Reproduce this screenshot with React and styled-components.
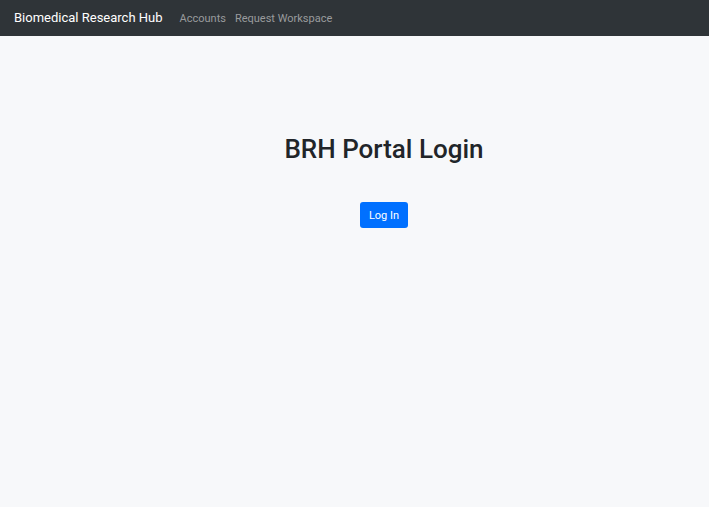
import React from "react";
import styled, { createGlobalStyle } from "styled-components";

const GlobalStyle = createGlobalStyle`
  * { box-sizing: border-box; }
  body {
    margin: 0;
    background: #f7f8fa;
    color: #212529;
    font-family: Roboto, "Liberation Sans", sans-serif;
  }
`;

const Navbar = styled.nav`
  display: flex;
  align-items: baseline;
  padding: 8px 14px;
  background: #2f3438;
`;

const Brand = styled.a`
  margin-right: 17px;
  color: #fff;
  font-size: 13px;
  line-height: 20px;
  text-decoration: none;
  white-space: nowrap;
`;

const NavLinks = styled.div`
  display: flex;
  gap: 9px;
`;

const NavLink = styled.a`
  color: #999b9d;
  font-size: 11px;
  line-height: 16px;
  text-decoration: none;
  white-space: nowrap;
`;

const Main = styled.main`
  display: flex;
  flex-direction: column;
  align-items: center;
  padding: 97px 0 0 59px;
`;

const Title = styled.h1`
  margin: 0 0 36px;
  font-size: 26px;
  font-weight: 500;
  line-height: 33px;
`;

const LoginButton = styled.button`
  padding: 6px 9px 4px;
  border: 0;
  border-radius: 3px;
  background: #0070ff;
  color: #fff;
  font-family: inherit;
  font-size: 11px;
  line-height: 16px;
  cursor: pointer;
`;

export default function App() {
  return (
    <>
      <GlobalStyle />
      <Navbar>
        <Brand href="#">Biomedical Research Hub</Brand>
        <NavLinks>
          <NavLink href="#accounts">Accounts</NavLink>
          <NavLink href="#workspace">Request Workspace</NavLink>
        </NavLinks>
      </Navbar>
      <Main>
        <Title>BRH Portal Login</Title>
        <LoginButton type="button">Log In</LoginButton>
      </Main>
    </>
  );
}
